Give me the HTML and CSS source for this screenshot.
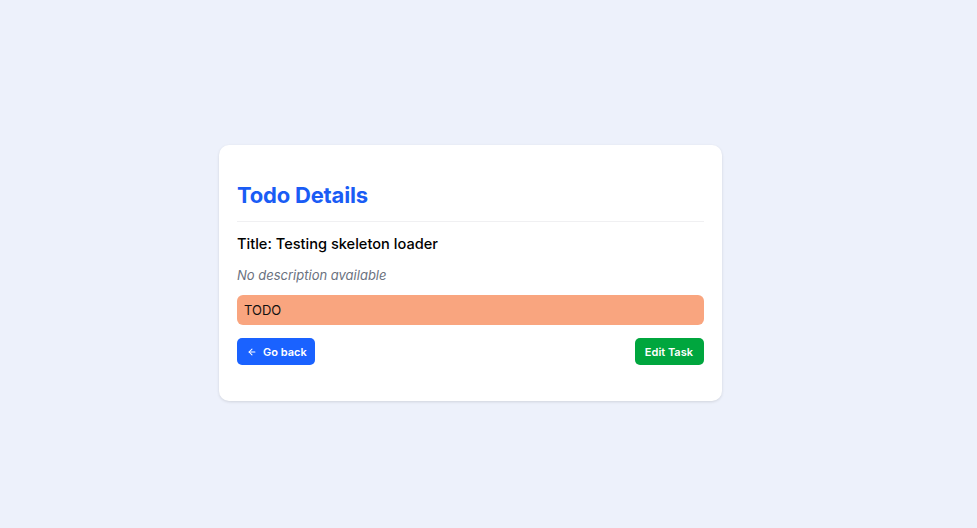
FILE: index.html
```html
<!DOCTYPE html>
<html>
<head>
<meta charset="utf-8">
<link rel="stylesheet" href="styles.css">
</head>
<body>
<main class="page">
  <section class="card">
    <h1 class="heading">Todo Details</h1>
    <h2 class="title">Title: Testing skeleton loader</h2>
    <p class="desc">No description available</p>
    <div class="status">TODO</div>
    <div class="actions">
      <button class="btn btn-back">
        <svg width="10" height="10" viewBox="0 0 24 24" fill="none" stroke="currentColor" stroke-width="2.5" stroke-linecap="round" stroke-linejoin="round"><path d="M19 12H5"/><path d="M12 19l-7-7 7-7"/></svg>
        <span>Go back</span>
      </button>
      <button class="btn btn-edit">Edit Task</button>
    </div>
  </section>
</main>
</body>
</html>
```
FILE: styles.css
```css
* { box-sizing: border-box; }
html, body { margin: 0; height: 100%; }
body {
  background: #edf1fb;
  font-family: Inter, "Noto Sans", sans-serif;
}
.page {
  padding: 145px 0 0 219px;
}
.card {
  width: 503px;
  background: #ffffff;
  border-radius: 10px;
  box-shadow: 0 1px 3px rgba(0, 0, 0, 0.12);
  padding: 29px 18px 36px;
}
.heading {
  margin: 0;
  color: #1a5cf5;
  font-size: 22px;
  font-weight: 700;
  line-height: 42px;
  padding-bottom: 5px;
  border-bottom: 1px solid #f0f0f2;
  letter-spacing: -0.2px;
}
.title {
  margin: 10px 0 0;
  font-size: 14.6px;
  font-weight: 500;
  color: #000;
  line-height: 24px;
}
.desc {
  margin: 10px 0 0;
  font-size: 13px;
  font-style: italic;
  color: #6b7280;
  line-height: 18px;
}
.status {
  margin-top: 11px;
  height: 30px;
  background: #f9a57f;
  border-radius: 6px;
  padding: 0 7px;
  font-size: 13px;
  line-height: 30px;
  color: #111;
}
.actions {
  display: flex;
  justify-content: space-between;
  margin-top: 13px;
}
.btn {
  height: 27px;
  border: none;
  border-radius: 5px;
  color: #fff;
  font-family: Inter, "Noto Sans", sans-serif;
  font-size: 11px;
  font-weight: 600;
  display: inline-flex;
  align-items: center;
  white-space: nowrap;
  cursor: pointer;
}
.btn-back {
  background: #1a62ff;
  padding: 0 8px 0 10px;
  gap: 6px;
}
.btn-edit {
  background: #00a63e;
  padding: 0 11px 0 10px;
}
```
